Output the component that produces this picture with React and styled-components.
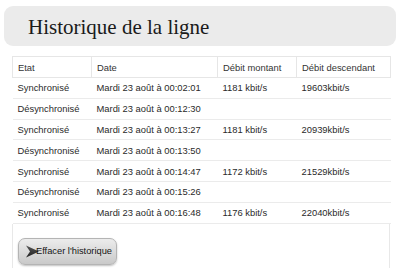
import React from "react";
import styled, { createGlobalStyle } from "styled-components";

const Global = createGlobalStyle`
  html, body { margin: 0; padding: 0; background: #fff; }
  body { font-family: "Liberation Sans", Arial, sans-serif; overflow: hidden; }
`;

const Page = styled.div`
  width: 400px;
  height: 268px;
  display: flex;
  flex-direction: column;
  padding-top: 6px;
  box-sizing: border-box;
  overflow: hidden;
`;

const TitleBar = styled.div`
  flex: none;
  margin: 0 4px;
  height: 40px;
  background: #ebebeb;
  border-radius: 9px;
  display: flex;
  align-items: center;
  padding-left: 24px;
  box-sizing: border-box;
`;

const Title = styled.h1`
  margin: 0;
  font-family: "Liberation Serif", "Times New Roman", serif;
  font-weight: normal;
  font-size: 21px;
  color: #1a1a1a;
  padding-top: 2px;
`;

const Content = styled.div`
  flex: none;
  margin: 10px 10px 0 12px;
  display: flex;
  flex-direction: column;
`;

const Table = styled.table`
  width: 378px;
  border-collapse: collapse;
  table-layout: fixed;
  font-size: 9.4px;
  color: #2a2a2a;
`;

const Th = styled.th`
  width: ${(p) => p.$w}px;
  height: 21px;
  text-align: left;
  font-weight: normal;
  padding: 0 0 0 5px;
  border: 1px solid #e6e6e6;
  box-sizing: border-box;
  color: #333;
`;

const Td = styled.td`
  height: 19.8px;
  padding: 0 0 0 5px;
  border-bottom: 1px solid #ebebeb;
  white-space: nowrap;
`;

const Footer = styled.div`
  flex: none;
  height: 50px;
  border: 1px solid #e8e8e8;
  border-top: none;
  padding: 14px 0 0 5px;
  box-sizing: border-box;
`;

const Button = styled.button`
  width: 99px;
  height: 27px;
  border-radius: 7px;
  border: 1px solid #b4b4b4;
  background: linear-gradient(#ececec, #d9d9d9 55%, #c9c9c9);
  box-shadow: 0 1px 2px rgba(0, 0, 0, 0.25);
  display: flex;
  align-items: center;
  padding: 0 0 0 7px;
  box-sizing: border-box;
  font-family: "Liberation Sans", Arial, sans-serif;
  font-size: 9.3px;
  color: #151515;
  cursor: pointer;
`;

const Arrow = styled.svg`
  width: 13px;
  height: 13px;
  flex: none;
  margin-right: -3px;
`;

const columns = [
  { label: "Etat", w: 79 },
  { label: "Date", w: 126 },
  { label: "Débit montant", w: 79 },
  { label: "Débit descendant", w: 94 },
];

const rows = [
  ["Synchronisé", "Mardi 23 août à 00:02:01", "1181 kbit/s", "19603kbit/s"],
  ["Désynchronisé", "Mardi 23 août à 00:12:30", "", ""],
  ["Synchronisé", "Mardi 23 août à 00:13:27", "1181 kbit/s", "20939kbit/s"],
  ["Désynchronisé", "Mardi 23 août à 00:13:50", "", ""],
  ["Synchronisé", "Mardi 23 août à 00:14:47", "1172 kbit/s", "21529kbit/s"],
  ["Désynchronisé", "Mardi 23 août à 00:15:26", "", ""],
  ["Synchronisé", "Mardi 23 août à 00:16:48", "1176 kbit/s", "22040kbit/s"],
];

export default function App() {
  return (
    <>
      <Global />
      <Page>
        <TitleBar>
          <Title>Historique de la ligne</Title>
        </TitleBar>
        <Content>
          <Table>
            <thead>
              <tr>
                {columns.map((c) => (
                  <Th key={c.label} $w={c.w}>
                    {c.label}
                  </Th>
                ))}
              </tr>
            </thead>
            <tbody>
              {rows.map((r, i) => (
                <tr key={i}>
                  {r.map((v, j) => (
                    <Td key={j}>{v}</Td>
                  ))}
                </tr>
              ))}
            </tbody>
          </Table>
          <Footer>
            <Button>
              <Arrow viewBox="0 0 13 13">
                <defs>
                  <linearGradient id="ag" x1="0" y1="0" x2="0" y2="1">
                    <stop offset="0" stopColor="#555" />
                    <stop offset="1" stopColor="#222" />
                  </linearGradient>
                </defs>
                <polygon points="0,0.5 13,6.5 0,12.5 4,6.5" fill="url(#ag)" />
              </Arrow>
              Effacer l'historique
            </Button>
          </Footer>
        </Content>
      </Page>
    </>
  );
}
